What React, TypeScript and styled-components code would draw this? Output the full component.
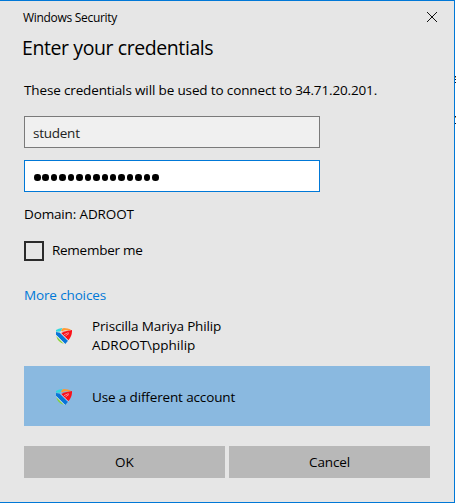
import React from "react";
import styled, { createGlobalStyle } from "styled-components";

const Global = createGlobalStyle`
  * { box-sizing: border-box; }
  body { margin: 0; background: #fff; font-family: "Open Sans", "Noto Sans", sans-serif; }
`;

const Screen = styled.div`
  display: flex;
  width: 456px;
  height: 503px;
  overflow: hidden;
`;

const Dialog = styled.main`
  display: flex;
  flex-direction: column;
  width: 455px;
  height: 503px;
  padding: 0 24px 24px;
  background: #e6e6e6;
  border: solid #0078d7;
  border-width: 1px 1px 1px 0;
`;

const Behind = styled.svg`
  width: 1px;
  height: 503px;
  flex: none;
`;

const Label = styled.span<{ $size?: number; $track?: number; $color?: string }>`
  display: block;
  font-size: ${(p) => p.$size ?? 13.5}px;
  letter-spacing: ${(p) => p.$track ?? -0.14}px;
  color: ${(p) => p.$color ?? "#000"};
  line-height: 19px;
  white-space: pre;
`;

const TitleBar = styled.header`
  display: flex;
  justify-content: space-between;
  align-items: center;
  height: 32px;
  margin-left: -1px;
`;

const CloseButton = styled.button`
  display: flex;
  margin-right: -8px;
  padding: 0;
  border: 0;
  background: none;
`;

const Heading = styled.h1`
  margin: 0 0 0 -2px;
  height: 30px;
  font-size: 19.5px;
  font-weight: 400;
  line-height: 30px;
  letter-spacing: -0.41px;
  white-space: nowrap;
`;

const Message = styled.div`
  margin-top: 18px;
  height: 35px;
`;

const Field = styled.div<{ $active?: boolean }>`
  display: flex;
  align-items: center;
  width: 296px;
  height: 32px;
  padding: 2px 0 0 8px;
  background: ${(p) => (p.$active ? "#fff" : "#f0f0f0")};
  border: 1px solid ${(p) => (p.$active ? "#0078d7" : "#7a7a7a")};
`;

const Fields = styled.div`
  display: grid;
  gap: 12px;
`;

const Dots = styled.div`
  display: flex;
  gap: 1.95px;
  margin: 1px 0 0 1px;
`;

const Dot = styled.i`
  width: 6.5px;
  height: 6.5px;
  border-radius: 50%;
  background: #000;
`;

const Domain = styled.div`
  margin-top: 13px;
  height: 36px;
`;

const Remember = styled.label`
  display: flex;
  align-items: center;
  gap: 8px;
  height: 20px;
`;

const CheckBox = styled.span`
  width: 20px;
  height: 20px;
  border: 2px solid #2b2b2b;
`;

const RememberText = styled(Label)`
  margin-top: -2px;
`;

const More = styled.div`
  margin-top: 25px;
  height: 20px;
`;

const Account = styled.div<{ $selected?: boolean }>`
  display: flex;
  align-items: center;
  gap: 20px;
  height: 60px;
  padding: ${(p) => (p.$selected ? 2 : 0)}px 0 0 32px;
  background: ${(p) => (p.$selected ? "#8ab9e0" : "transparent")};
`;

const Buttons = styled.footer`
  display: grid;
  grid-template-columns: 201px 201px;
  gap: 4px;
  margin-top: 20px;
`;

const Button = styled.button`
  display: flex;
  align-items: center;
  justify-content: center;
  height: 32px;
  padding: 0;
  border: 0;
  background: #b8b8b8;
  font-family: inherit;
`;

const Shield = () => (
  <svg width="16" height="16" viewBox="0 0 16 16">
    <path d="M0 2Q2 .4 6.500 0L4.500 3.400L0 3.700Z" fill="#30d9df" />
    <path d="M5 2.400Q6.500 0 8 0Q12 .2 15 1.500L12.500 2.800Q9 1.600 6 3.400Z" fill="#ff9a35" />
    <path d="M5 5Q9 3 16 2Q16.200 8 12.300 12.300Z" fill="#fb1018" />
    <path d="M8 6.600L12.500 4.600M9.500 8L13 5.400" stroke="#f3bfc7" strokeWidth=".7" />
    <path d="M0 4L4 4.800L12 12.800L9.300 16L0 6.800Z" fill="#0875d7" />
    <path d="M.3 8L8 16Q1.500 14 .3 8Z" fill="#86d238" />
    <path d="M4.500 4.900L12.200 12.600M0 7.300L8.700 16" fill="none" stroke="#e9f3fb" strokeWidth=".6" />
  </svg>
);

export default function App() {
  return (
    <>
      <Global />
      <Screen>
        <Dialog>
          <TitleBar>
            <Label $size={12} $track={-0.3}>Windows Security</Label>
            <CloseButton aria-label="Close">
              <svg width="12" height="12" viewBox="0 0 12 12">
                <path d="M1 1L11 11M11 1L1 11" stroke="#111" strokeWidth="1" />
              </svg>
            </CloseButton>
          </TitleBar>
          <Heading>Enter your credentials</Heading>
          <Message>
            <Label>These credentials will be used to connect to 34.71.20.201.</Label>
          </Message>
          <Fields>
            <Field><Label $color="#222" $track={-0.25}>student</Label></Field>
            <Field $active>
              <Dots>{Array.from({ length: 15 }, (_, i) => <Dot key={i} />)}</Dots>
            </Field>
          </Fields>
          <Domain><Label>Domain: ADROOT</Label></Domain>
          <Remember><CheckBox /><RememberText $track={-0.27}>Remember me</RememberText></Remember>
          <More><Label $color="#0078d7">More choices</Label></More>
          <Account>
            <Shield />
            <div>
              <Label>Priscilla Mariya Philip</Label>
              <Label $track={0}>ADROOT\pphilip</Label>
            </div>
          </Account>
          <Account $selected>
            <Shield />
            <Label>Use a different account</Label>
          </Account>
          <Buttons>
            <Button><Label $track={0}>OK</Label></Button>
            <Button><Label>Cancel</Label></Button>
          </Buttons>
        </Dialog>
        <Behind viewBox="0 0 1 503">
          <path d="M0 76h1v1H0zM0 79h1v1H0zM0 82h1v1H0zM0 116h1v1H0zM0 123h1v1H0z" fill="#15152a" />
          <path d="M0 77h1v1H0zM0 117h1v1H0z" fill="#c79a50" />
        </Behind>
      </Screen>
    </>
  );
}
